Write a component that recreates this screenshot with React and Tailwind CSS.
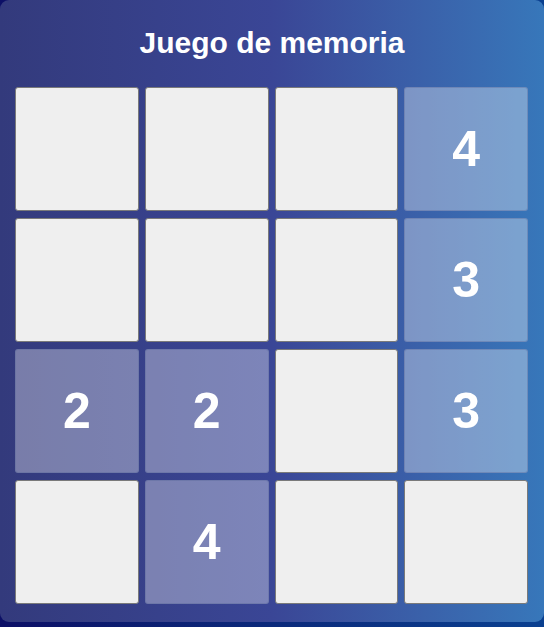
import React from 'react';

const board = [
    [null, null, null, 4],
    [null, null, null, 3],
    [2, 2, null, 3],
    [null, 4, null, null],
];

function Tile({ value }) {
    if (value === null) {
        return <div className="h-[124px] rounded-[3px] border border-[#7a7a7a] bg-[#efefef]"></div>;
    }
    return (
        <div className="h-[124px] rounded-[3px] border border-[#5b6a9c]/40 bg-white/[0.34] flex items-center justify-center">
            <span className="text-[50px] font-bold text-white leading-none">{value}</span>
        </div>
    );
}

export default function App() {
    return (
        <div className="h-[627px] w-[544px] bg-gradient-to-r from-[#0c0f66] to-[#0a4090] font-['Liberation_Sans',Arial,sans-serif]">
            <div className="h-[622px] rounded-[9px] bg-gradient-to-r from-[#333a7c] via-[#3a4696] to-[#3777ba] pt-[25px]">
                <h1 className="text-center text-[30px] leading-[36px] font-bold text-white mb-[26px]">Juego de memoria</h1>
                <div className="grid grid-cols-4 gap-x-[6px] gap-y-[7px] pl-[15px] pr-[16px]">
                    {board.flat().map((v, i) => (
                        <Tile key={i} value={v} />
                    ))}
                </div>
            </div>
        </div>
    );
}
